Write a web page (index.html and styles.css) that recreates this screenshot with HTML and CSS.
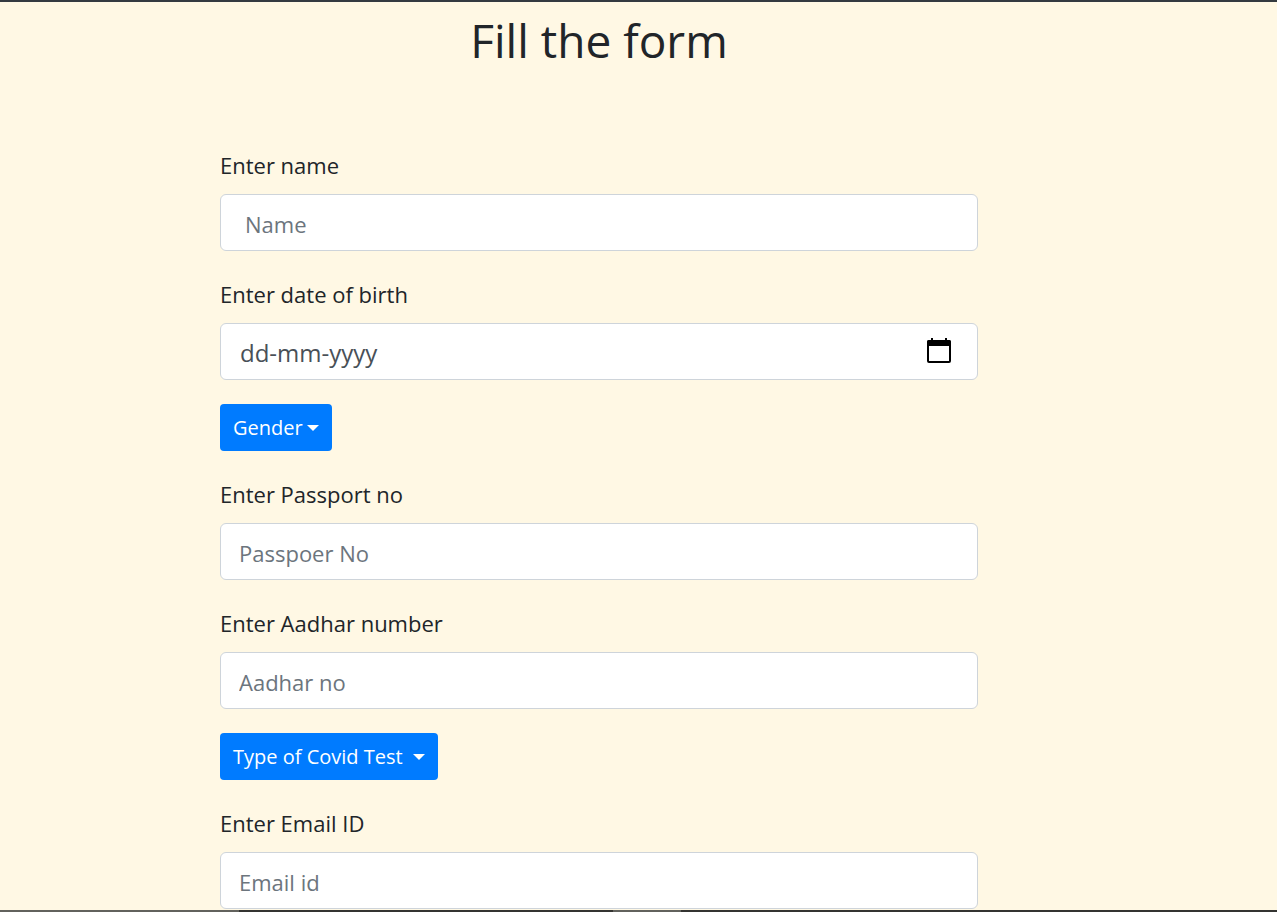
FILE: index.html
```html
<!DOCTYPE html>
<html lang="en">
<head>
  <meta charset="utf-8">
  <title>Fill the form</title>
  <link rel="stylesheet" href="styles.css">
</head>
<body>
  <header class="topbar"></header>
  <main class="content">
    <h1 class="title">Fill the form</h1>
    <form class="form">
      <div class="field">
        <label class="label" for="name">Enter name</label>
        <input class="control control-indent" id="name" type="text" placeholder="Name">
      </div>
      <div class="field">
        <label class="label" for="dob">Enter date of birth</label>
        <div class="date">
          <input class="control control-date" id="dob" type="text" placeholder="dd-mm-yyyy">
          <button class="picker" type="button" aria-label="Open calendar">
            <svg width="24" height="26" viewBox="0 0 24 26" fill="none">
              <path d="M4 0h2v3H4zM18 0h2v3h-2z" fill="#000"/>
              <path d="M2 2h20a2 2 0 0 1 2 2v4H0V4a2 2 0 0 1 2-2z" fill="#000"/>
              <rect x="1" y="3" width="22" height="21" rx="1" stroke="#000" stroke-width="2"/>
            </svg>
          </button>
        </div>
      </div>
      <button class="dropdown" type="button">Gender<span class="caret"></span></button>
      <div class="field">
        <label class="label" for="passport">Enter Passport no</label>
        <input class="control" id="passport" type="text" placeholder="Passpoer No">
      </div>
      <div class="field">
        <label class="label" for="aadhar">Enter Aadhar number</label>
        <input class="control" id="aadhar" type="text" placeholder="Aadhar no">
      </div>
      <button class="dropdown dropdown-wide" type="button">Type of Covid Test<span class="caret"></span></button>
      <div class="field">
        <label class="label" for="email">Enter Email ID</label>
        <input class="control" id="email" type="email" placeholder="Email id">
      </div>
    </form>
  </main>
  <footer class="bottombar">
    <span class="segment segment-start"></span>
    <span class="segment segment-middle"></span>
  </footer>
</body>
</html>
```
FILE: styles.css
```css
* {
  box-sizing: border-box;
}

body {
  display: flex;
  flex-direction: column;
  min-height: 100vh;
  margin: 0;
  background: #fff8e4;
  color: #212529;
  font-family: "Segoe UI", "Open Sans", "Noto Sans", sans-serif;
  font-size: 22px;
}

.topbar {
  height: 2px;
  background: #343a40;
}

.content {
  flex: 1;
  margin: 0 299px 0 220px;
}

.title {
  margin: 6px 0 74px;
  font-size: 46px;
  font-weight: 400;
  line-height: 64px;
  text-align: center;
}

.form {
  display: flex;
  flex-direction: column;
  align-items: flex-start;
  gap: 24px;
}

.field {
  display: flex;
  flex-direction: column;
  gap: 10px;
  width: 100%;
}

.label {
  line-height: 38px;
}

.control {
  width: 100%;
  height: 57px;
  padding: 2px 18px 0;
  border: 1px solid #ced4da;
  border-radius: 6px;
  background: #fff;
  color: #495057;
  font: inherit;
}

.control::placeholder {
  color: #6c757d;
  opacity: 1;
}

.control-indent {
  padding-left: 24px;
}

.control-date {
  padding-left: 19px;
  font-size: 24px;
}

.control-date::placeholder {
  color: #495057;
}

.date {
  position: relative;
}

.picker {
  position: absolute;
  top: 15px;
  right: 27px;
  display: flex;
  padding: 0;
  border: 0;
  background: none;
}

.dropdown {
  display: flex;
  align-items: center;
  gap: 4px;
  height: 47px;
  padding: 0 13px;
  border: 0;
  border-radius: 4px;
  background: #007bff;
  color: #fff;
  font: inherit;
  font-size: 20px;
}

.dropdown-wide {
  gap: 10px;
}

.caret {
  border: 6px solid transparent;
  border-top-color: #fff;
  border-bottom: 0;
}

.bottombar {
  display: flex;
  height: 2px;
  background: #343431;
}

.segment {
  background: #62625d;
}

.segment-start {
  width: 239px;
}

.segment-middle {
  width: 68px;
  margin-left: 374px;
}
```
